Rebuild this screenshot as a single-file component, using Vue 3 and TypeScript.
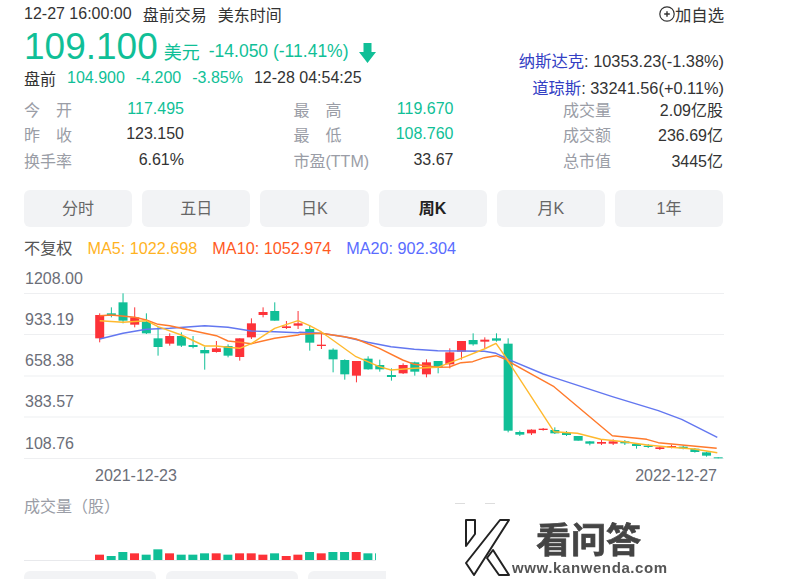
<template>
  <div class="page">
    <div class="head">
      <div class="quote">
        <div class="row meta">
          <span>12-27 16:00:00</span>
          <span>盘前交易</span>
          <span>美东时间</span>
        </div>
        <div class="row price-row">
          <span class="price">109.100</span>
          <span class="unit">美元</span>
          <span class="change">-14.050 (-11.41%)</span>
          <svg class="arrow" width="17" height="20" viewBox="0 0 17 20">
            <path d="M4.5 0h8v9H17L8.5 20 0 9h4.5z" fill="#10bf97" />
          </svg>
        </div>
        <div class="row pre">
          <span>盘前</span>
          <span class="green">104.900</span>
          <span class="green">-4.200</span>
          <span class="green">-3.85%</span>
          <span>12-28 04:54:25</span>
        </div>
      </div>
      <div class="side">
        <div class="watch">
          <svg width="16" height="16" viewBox="0 0 16 16">
            <circle cx="8" cy="8" r="7.2" fill="none" stroke="#333" stroke-width="1.2" />
            <path d="M5.2 8h5.6M8 5.2v5.6" stroke="#333" stroke-width="1.4" />
          </svg>
          <span>加自选</span>
        </div>
        <div class="index first"><span class="link">纳斯达克</span>: 10353.23(-1.38%)</div>
        <div class="index"><span class="link">道琼斯</span>: 33241.56(+0.11%)</div>
      </div>
    </div>

    <div class="stats">
      <div v-for="s in stats" :key="s.label" class="stat">
        <span class="label" :class="{ spread: s.spread }">{{ s.label }}</span>
        <span :class="{ green: s.green }">{{ s.value }}</span>
      </div>
    </div>

    <div class="tabs">
      <div v-for="t in tabs" :key="t" class="tab" :class="{ active: t === '周K' }">{{ t }}</div>
    </div>

    <div class="ma">
      <span class="plain">不复权</span>
      <span class="ma5">MA5: 1022.698</span>
      <span class="ma10">MA10: 1052.974</span>
      <span class="ma20">MA20: 902.304</span>
    </div>

    <svg class="chart" width="810" height="230" viewBox="0 260 810 230">
      <line v-for="y in grid" :key="y" x1="24" x2="724" :y1="y" :y2="y" stroke="#eeeff1" stroke-width="1.2" />
      <text v-for="a in axis" :key="a.text" x="25" :y="a.y" class="axis">{{ a.text }}</text>
      <g v-for="(c, i) in candles" :key="i">
        <line :x1="c.x" :x2="c.x" :y1="c.wt" :y2="c.wb" :stroke="c.color" stroke-width="1" />
        <rect :x="c.x - 4.5" :y="c.bt" width="9" :height="c.bb - c.bt" :fill="c.color" />
      </g>
      <polyline :points="ma20" class="line" stroke="#6377f0" />
      <polyline :points="ma10" class="line" stroke="#ff7a2c" />
      <polyline :points="ma5" class="line" stroke="#ffb92e" />
      <text x="95" y="481" class="axis">2021-12-23</text>
      <text x="717" y="481" class="axis" text-anchor="end">2022-12-27</text>
    </svg>

    <div class="vol-title">成交量（股）</div>
    <svg class="volume" width="352" height="36" viewBox="24 526 352 36">
      <line x1="24" x2="376" y1="560.5" y2="560.5" stroke="#e8e9ec" />
      <rect v-for="(b, i) in bars" :key="i" :x="b.x" :y="b.y" width="9" :height="560 - b.y" :fill="b.color" />
    </svg>

    <div class="bottom">
      <div class="card"></div>
      <div class="card"></div>
      <div class="card"></div>
    </div>

    <div class="scraps">
      <span></span>
      <span></span>
    </div>

    <div class="mark">
      <svg class="mark-k" width="58" height="62" viewBox="8 18 58 62">
        <g fill="#fff" stroke="#222" stroke-width="2" stroke-linejoin="round">
          <path d="M11 22h9v14l-9 12z" />
          <path d="M45 22h9L19 77 11 65z" />
          <path d="M38 52l16 25H44L32 60z" />
        </g>
      </svg>
      <div class="mark-text">
        <div class="mark-cn">看问答</div>
        <div class="mark-url">www.kanwenda.com</div>
      </div>
    </div>
  </div>
</template>

<script setup lang="ts">
const GREEN = "#10bf97";
const RED = "#fd3238";

const stats = [
  { label: "今开", value: "117.495", green: true, spread: true },
  { label: "最高", value: "119.670", green: true, spread: true },
  { label: "成交量", value: "2.09亿股" },
  { label: "昨收", value: "123.150", spread: true },
  { label: "最低", value: "108.760", green: true, spread: true },
  { label: "成交额", value: "236.69亿" },
  { label: "换手率", value: "6.61%" },
  { label: "市盈(TTM)", value: "33.67" },
  { label: "总市值", value: "3445亿" },
];

const tabs = ["分时", "五日", "日K", "周K", "月K", "1年"];

const grid = [293.5, 334.5, 376, 417, 458.5];
const axis = [
  { text: "1208.00", y: 284 },
  { text: "933.19", y: 325 },
  { text: "658.38", y: 366 },
  { text: "383.57", y: 407 },
  { text: "108.76", y: 449 },
];

// g/r, wick top, body top, body bottom, wick bottom, read off the reference crops (3x)
type Raw = [string, number, number, number, number];
const seg1: Raw[] = [
  ["r", 85, 90, 160, 172], ["g", 67, 85, 93, 97], ["g", 25, 52, 107, 115], ["r", 67, 97, 119, 127],
  ["g", 85, 110, 145, 147], ["g", 125, 160, 186, 212], ["r", 145, 153, 176, 182], ["g", 142, 153, 182, 186],
  ["g", 153, 180, 186, 190], ["g", 185, 195, 205, 254], ["r", 168, 190, 201, 203], ["g", 178, 183, 212, 217],
  ["r", 160, 160, 216, 227], ["r", 100, 115, 157, 162], ["r", 67, 81, 90, 97], ["g", 52, 78, 107, 107],
  ["r", 108, 124, 129, 132], ["r", 78, 115, 122, 132],
];
const seg2: Raw[] = [
  ["g", 0, 12, 53, 77], ["r", 20, 59, 63, 72], ["g", 70, 74, 103, 142], ["g", 103, 105, 148, 164],
  ["r", 108, 108, 152, 172], ["g", 94, 101, 133, 134], ["g", 104, 120, 133, 140], ["g", 130, 150, 156, 167],
  ["r", 115, 120, 145, 147], ["g", 110, 112, 140, 152], ["r", 103, 112, 148, 157], ["g", 108, 108, 127, 145],
  ["r", 70, 82, 118, 130], ["r", 48, 48, 80, 104], ["g", 25, 45, 58, 62], ["r", 37, 44, 50, 70],
  ["g", 25, 40, 47, 50], ["g", 40, 56, 317, 322],
];
const seg3: Raw[] = [
  ["g", 272, 276, 284, 288], ["r", 268, 269, 280, 285], ["r", 264, 266, 270, 272], ["g", 262, 270, 280, 282],
  ["g", 273, 279, 285, 288], ["g", 288, 288, 302, 302], ["g", 303, 304, 311, 316], ["r", 300, 306, 311, 315],
  ["r", 298, 304, 311, 315], ["g", 300, 304, 310, 315], ["g", 310, 312, 318, 326], ["g", 312, 317, 321, 324],
  ["r", 320, 322, 327, 330], ["r", 314, 318, 322, 325], ["g", 316, 320, 325, 328], ["g", 324, 326, 336, 338],
  ["g", 335, 337, 347, 350], ["g", 352, 352, 355, 355],
];

const toCandle = (r: Raw, x: number, top: number) => ({
  x,
  color: r[0] === "g" ? GREEN : RED,
  wt: top + r[1] / 3,
  bt: top + r[2] / 3,
  bb: top + r[3] / 3,
  wb: top + r[4] / 3,
});

const STEP = 11.67;
const candles = [
  ...seg1.map((r, i) => toCandle(r, 99.7 + i * STEP, 285)),
  ...seg2.map((r, i) => toCandle(r, 99.7 + (i + 18) * STEP, 325)),
  ...seg3.map((r, i) => toCandle(r, 99.7 + (i + 36) * STEP, 340)),
];

const pts = (ox: number, oy: number, list: number[][]) =>
  list.map(([x, y]) => `${(ox + x / 3).toFixed(1)},${(oy + y / 3).toFixed(1)}`).join(" ");

const ma20 = [
  pts(80, 285, [[59, 162], [129, 145], [199, 133], [269, 130], [374, 122], [444, 127], [514, 138], [584, 140], [654, 143]]),
  pts(300, 325, [[0, 22], [63, 25], [133, 35], [203, 52], [273, 65], [343, 73], [413, 77], [483, 78], [553, 79], [588, 85], [623, 102]]),
  pts(500, 340, [[22, 57], [130, 102], [162, 113], [337, 170], [475, 212], [545, 238], [652, 292]]),
].join(" ");

const ma10 = [
  pts(80, 285, [[59, 92], [94, 90], [164, 97], [199, 105], [234, 118], [269, 122], [339, 137], [409, 152], [444, 168], [479, 172], [514, 176], [584, 160], [654, 150]]),
  pts(300, 325, [[0, 28], [63, 25], [133, 35], [168, 42], [238, 70], [308, 105], [343, 118], [378, 122], [413, 127], [448, 126], [483, 113], [518, 110], [553, 98], [588, 92], [623, 105]]),
  pts(500, 340, [[22, 62], [162, 140], [337, 287], [440, 298], [475, 308], [650, 325]]),
].join(" ");

const ma5 = [
  pts(80, 285, [[59, 107], [129, 112], [199, 107], [234, 125], [304, 150], [374, 183], [409, 183], [444, 187], [479, 190], [514, 176], [584, 130], [654, 107], [689, 122]]),
  pts(300, 325, [[63, 20], [98, 45], [168, 95], [238, 125], [273, 135], [343, 130], [413, 127], [483, 100], [553, 72], [588, 55], [623, 105]]),
  pts(500, 340, [[22, 60], [162, 275], [232, 280], [302, 298], [372, 305], [442, 315], [512, 322], [582, 327], [652, 338]]),
].join(" ");

const volRaw: [string, number][] = [
  ["r", 194], ["g", 198], ["g", 186], ["r", 190], ["g", 194], ["g", 178], ["r", 190], ["g", 194], ["g", 194],
  ["g", 190], ["r", 190], ["g", 194], ["r", 190], ["r", 190], ["r", 194], ["g", 190], ["r", 198], ["r", 194],
  ["g", 186], ["r", 190], ["g", 186], ["g", 186], ["r", 186], ["g", 190], ["g", 190],
];
const bars = volRaw.map(([c, y], i) => ({
  x: 95 + i * STEP,
  y: 490 + y / 3,
  color: c === "g" ? GREEN : RED,
}));
</script>

<style>
html,
body {
  margin: 0;
  background: #fff;
}
</style>

<style scoped>
.page {
  position: relative;
  width: 810px;
  height: 579px;
  overflow: hidden;
  font-family: "Liberation Sans", "Noto Sans CJK SC", sans-serif;
  font-size: 16px;
  color: #333;
}

.head {
  display: flex;
  justify-content: space-between;
  width: 700px;
  margin-left: 24px;
  height: 96px;
}

.row {
  display: flex;
  align-items: center;
  gap: 11px;
}

.meta {
  height: 28px;
}

.price-row {
  height: 38px;
  gap: 0;
}

.price {
  font-size: 37px;
  line-height: 38px;
  color: #10bf97;
  margin-right: 6px;
}

.unit {
  font-size: 18px;
  color: #10bf97;
  margin-top: 8px;
  margin-right: 9px;
}

.change {
  font-size: 17.5px;
  color: #10bf97;
  margin-top: 8px;
  margin-right: 10px;
}

.arrow {
  margin-top: 12px;
}

.pre {
  height: 24px;
}

.green {
  color: #10bf97;
}

.side {
  text-align: right;
  font-size: 16.35px;
}

.watch {
  display: flex;
  justify-content: flex-end;
  align-items: center;
  height: 28px;
}

.index {
  height: 27px;
  line-height: 27px;
}

.index.first {
  margin-top: 20px;
}

.link {
  color: #3340c4;
}

.stats {
  display: grid;
  grid-template-columns: repeat(3, 160px);
  justify-content: space-between;
  width: 699px;
  margin-left: 24px;
  grid-auto-rows: 25.5px;
}

.stat {
  display: flex;
  justify-content: space-between;
  align-items: center;
}

.label {
  color: #9a9da6;
}

.label.spread {
  width: 48px;
  text-align-last: justify;
}

.tabs {
  display: flex;
  gap: 10px;
  width: 699px;
  margin: 17.5px 0 0 24px;
}

.tab {
  flex: 1;
  height: 37px;
  line-height: 37px;
  text-align: center;
  background: #f2f3f5;
  border-radius: 6px;
  color: #666;
}

.tab.active {
  font-weight: 700;
  color: #222;
}

.ma {
  display: flex;
  gap: 15px;
  margin: 9px 0 0 24px;
  height: 24px;
  line-height: 24px;
  font-size: 16.2px;
}

.plain {
  color: #555;
}

.ma5 {
  color: #ffb31f;
}

.ma10 {
  color: #ff5a1f;
}

.ma20 {
  color: #5a6cff;
}

.chart {
  display: block;
}

.axis {
  font-size: 16px;
  fill: #6b6e78;
}

.line {
  fill: none;
  stroke-width: 1.4;
  stroke-linejoin: round;
}

.vol-title {
  margin: 5px 0 0 24px;
  height: 24px;
  line-height: 24px;
  color: #9a9da6;
}

.volume {
  display: block;
  margin: 7px 0 0 24px;
}

.bottom {
  display: flex;
  gap: 10px;
  width: 362px;
  margin: 9px 0 0 24px;
  overflow: hidden;
}

.card {
  flex: 0 0 132px;
  height: 30px;
  background: #f2f3f5;
  border-radius: 6px;
}

.scraps {
  position: absolute;
  left: 455px;
  top: 503px;
  display: flex;
  gap: 20px;
}

.scraps span {
  width: 10px;
  height: 1px;
  background: #ddd;
}

.mark {
  position: absolute;
  left: 463px;
  top: 516px;
  display: flex;
  align-items: flex-start;
  background: #fff;
  filter: blur(0.6px);
}

.mark-k {
  display: block;
}

.mark-text {
  margin: 5px 0 0 -9px;
  font-weight: 700;
  color: #444;
}

.mark-cn {
  font-size: 35px;
  line-height: 40px;
  padding-left: 24px;
  -webkit-text-stroke: 0.7px #444;
}

.mark-url {
  margin-top: -2px;
  font-size: 15px;
  line-height: 18px;
  letter-spacing: 0.6px;
  color: #555;
}
</style>
